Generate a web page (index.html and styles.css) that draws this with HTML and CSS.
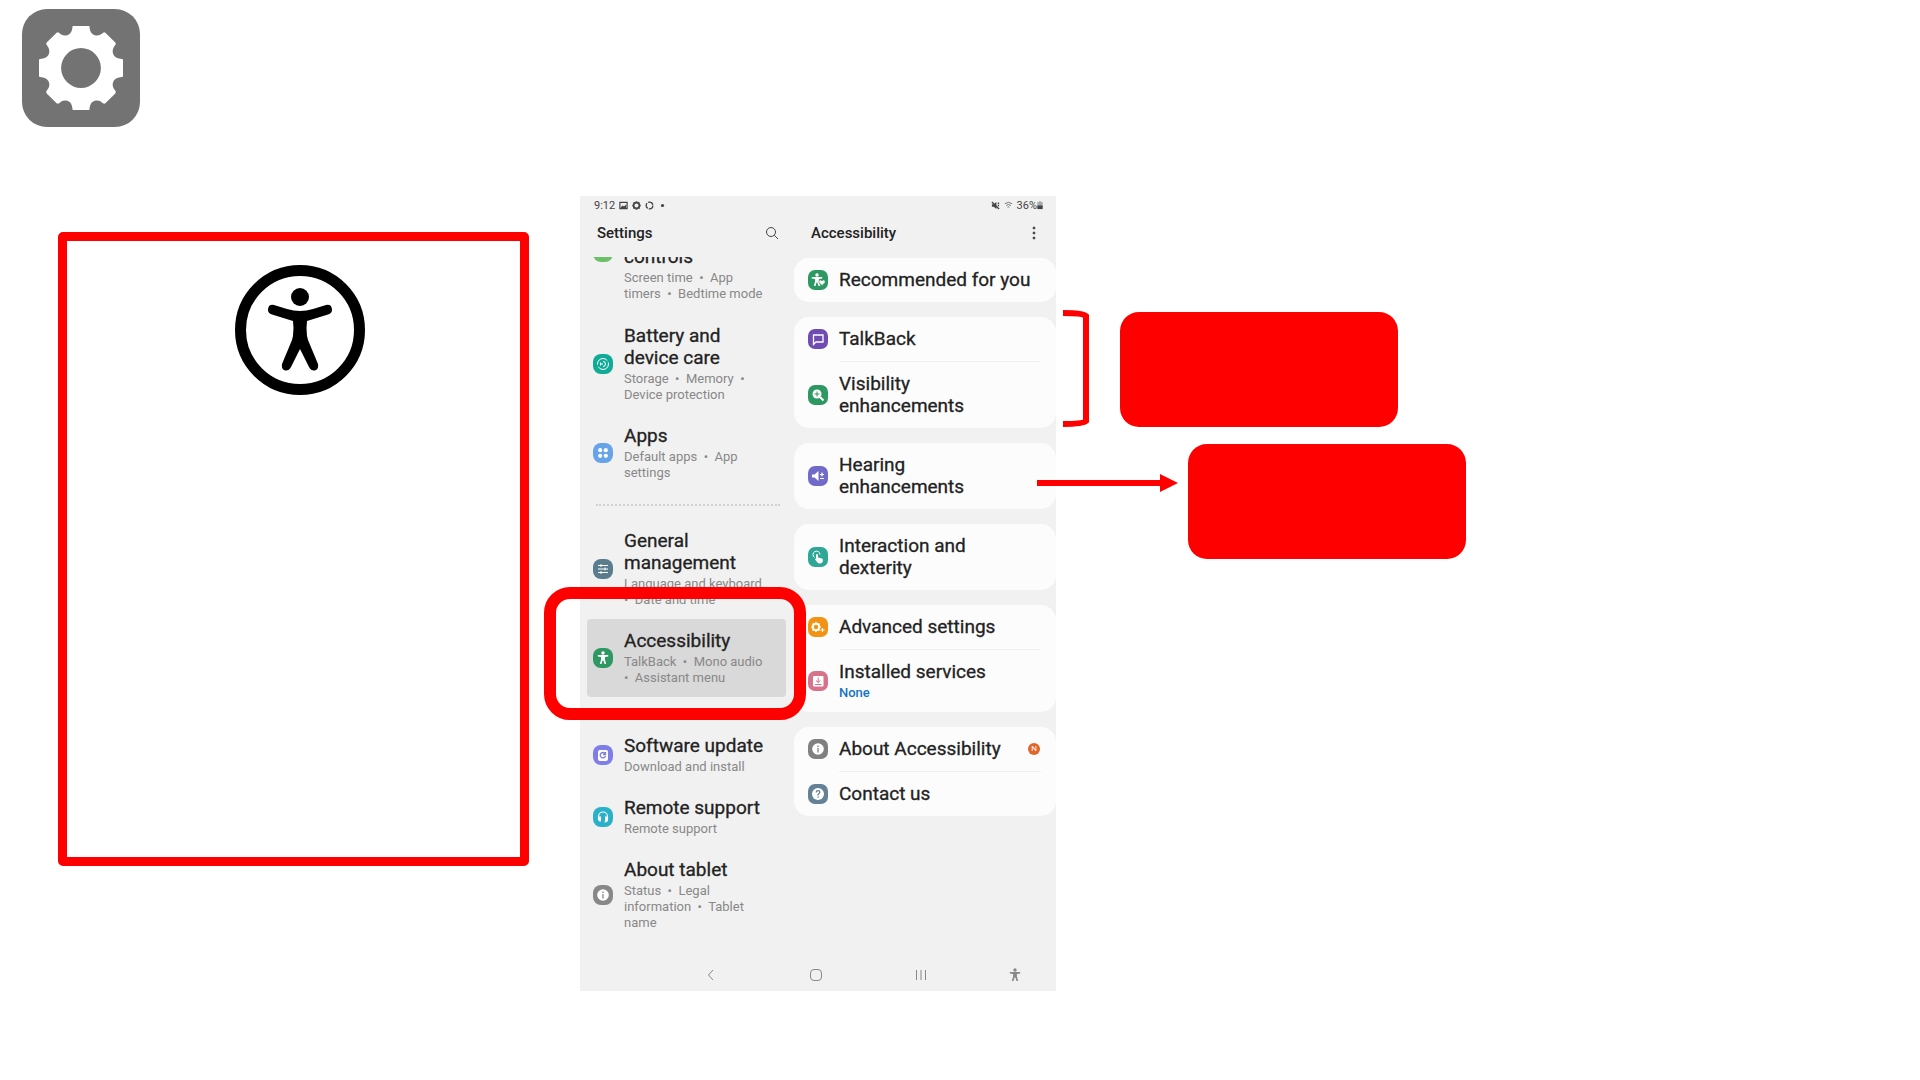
FILE: index.html
```html
<!DOCTYPE html>
<html lang="en">
<head>
    <meta charset="UTF-8">
    <meta name="viewport" content="width=device-width, initial-scale=1.0">
    <title>Accessibility settings</title>
    <link rel="stylesheet" href="styles.css">
</head>
<body>
    <svg class="defs" aria-hidden="true">
        <symbol id="person" viewBox="0 0 20 20">
            <circle cx="10" cy="5" r="1.7"/>
            <path d="M4.8 7.1h10.4v1.5l-3.3.5v2.3l1.3 4.6h-1.7L10.4 12.6h-.8L8.500 16H6.800l1.300-4.600V9.100l-3.300-.5z"/>
        </symbol>
        <symbol id="gear" viewBox="0 0 80 80">
            <path fill-rule="evenodd" d="M32 0Q32-1 33-1H47Q48-1 48 0C48.500 5 49.500 8 54 9C58 9.500 59.500 7 61.500 6Q62.500 5.500 63.500 6.500L72.500 15.500Q73.500 16.500 73 17.500C71.500 20 69.500 22 70.500 26C71.500 30 75 31 79 31.500Q80.500 31.500 80.500 33V47Q80.500 48.500 79 48.500C75 49 71.500 50 70.500 54C69.500 58 71.500 60 73 62Q73.500 63.500 72.500 64.500L63.500 73.500Q62.500 74.500 61.500 74C59.500 72.500 58 70.500 54 71C49.500 72 48.500 75 48 80Q48 81 47 81H33Q32 81 32 80C31.500 75 30.500 72 26 71C22 70.500 20.500 72.500 18.500 74Q17.500 74.500 16.500 73.500L7.500 64.500Q6.500 63.500 7 62C8.500 60 10.500 58 9.500 54C8.500 50 5 49 1 48.500Q-.5 48.500-.5 47V33Q-.5 31.500 1 31.500C5 31 8.500 30 9.500 26C10.500 22 8.500 20 7 17.500Q6.500 16.500 7.500 15.500L16.500 6.500Q17.500 5.500 18.500 6C20.500 7 22 9.500 26 9C30.500 8 31.500 5 32 0ZM40 21a19 19 0 1 0 0 38a19 19 0 1 0 0-38Z"/>
        </symbol>
    </svg>

    <header class="top">
        <div class="app-icon">
            <svg viewBox="-2 -2 84 84"><use href="#gear" width="80" height="80" overflow="visible"/></svg>
        </div>
    </header>

    <main class="slide">
        <section class="note">
            <svg class="note-icon" viewBox="0 0 130 130">
                <circle cx="65" cy="65" r="59.500" fill="none" stroke="#000" stroke-width="11"/>
                <circle cx="65" cy="32" r="9"/>
                <path d="M39 40Q33 39 33 45Q33 48 37 49.500L58 56Q59 63 58 71L57 75L47 99Q46 104 50 105.500Q54 106 56 102L65 84L74 102Q76 106 80 105.500Q84 104 83 99L73 75L72 71Q71 63 72 56L93 49.500Q97 48 97 45Q97 39 91 40L78 44Q65 48 52 44Z"/>
            </svg>
        </section>

        <section class="tablet">
            <div class="statusbar">
                <span>9:12</span>
                <svg viewBox="0 0 10 10"><path fill="none" stroke="#444" stroke-width="1.300" d="M1 1.500h8v7H1z"/><path d="M2 7l2-2 1.500 1L8 4v4H2z"/></svg>
                <svg viewBox="-2 -2 84 84"><use href="#gear" width="80" height="80"/></svg>
                <svg viewBox="0 0 10 10"><circle cx="5" cy="5" r="3.700" fill="none" stroke="#444" stroke-width="1.500" stroke-dasharray="6.500 1.200"/></svg>
                <svg viewBox="0 0 10 10"><circle cx="5" cy="5" r="1.800"/></svg>
                <div class="status-right">
                    <svg viewBox="0 0 10 10"><path d="M1 3.500h2L6 1v8L3 6.500H1z"/><path stroke="#444" stroke-width="1.500" d="M1 1l8 8M7.500 3l1.500-1M7.500 5H9"/></svg>
                    <svg viewBox="0 0 10 10"><path fill="none" stroke="#666" d="M1 3q4-3 8 0M2.500 5q2.500-2 5 0M4 7q1-1 2 0"/></svg>
                    <span>36%</span>
                    <svg class="battery" viewBox="0 0 6 10"><path fill="#aaa" d="M2 0h2v1h2v5H0V1h2z"/><path d="M0 5h6v4H0z"/></svg>
                </div>
            </div>

            <div class="titles">
                <div class="title-left">
                    <h1>Settings</h1>
                    <button type="button" aria-label="Search">
                        <svg viewBox="0 0 14 14"><circle cx="6" cy="6" r="4.500"/><path d="M9.300 9.300L13 13"/></svg>
                    </button>
                </div>
                <div class="title-right">
                    <h2>Accessibility</h2>
                    <button type="button" class="more" aria-label="More options">
                        <svg viewBox="0 0 14 14"><circle cx="7" cy="2" r="1"/><circle cx="7" cy="7" r="1"/><circle cx="7" cy="12" r="1"/></svg>
                    </button>
                </div>
            </div>

            <div class="panes">
                <nav class="menu">
                    <a href="#" class="item scrolled">
                        <svg class="icon" viewBox="0 0 20 20"><rect width="20" height="20" rx="8" fill="#6cc067"/></svg>
                        <span><b>controls</b><small>Screen time&nbsp; •&nbsp; App timers&nbsp; •&nbsp; Bedtime mode</small></span>
                    </a>
                    <a href="#" class="item">
                        <svg class="icon" viewBox="0 0 20 20"><rect width="20" height="20" rx="8" fill="#10ab97"/><circle cx="10" cy="10" r="5.500" fill="none" stroke="#fff" stroke-dasharray="14 2"/><path fill="none" stroke="#fff" d="M7.500 8.500v3M10 7.500a2.500 2.500 0 1 1 0 5M8 10h2"/></svg>
                        <span><b>Battery and device care</b><small>Storage&nbsp; •&nbsp; Memory&nbsp; •&nbsp; Device protection</small></span>
                    </a>
                    <a href="#" class="item">
                        <svg class="icon" viewBox="0 0 20 20"><rect width="20" height="20" rx="8" fill="#67a3e8"/><g fill="#fff"><circle cx="7.200" cy="7.200" r="2.100"/><circle cx="12.800" cy="7.200" r="2.100"/><circle cx="7.200" cy="12.800" r="2.100"/><circle cx="12.800" cy="12.800" r="2.100"/></g></svg>
                        <span><b>Apps</b><small>Default apps&nbsp; •&nbsp; App settings</small></span>
                    </a>
                    <hr>
                    <a href="#" class="item">
                        <svg class="icon" viewBox="0 0 20 20"><rect width="20" height="20" rx="8" fill="#5b7c8d"/><path stroke="#fff" d="M5 6.500h10M5 10h10M5 13.500h10M8 5v3M12 8.500v3M8 12v3"/></svg>
                        <span><b>General management</b><small>Language and keyboard&nbsp; •&nbsp; Date and time</small></span>
                    </a>
                    <a href="#" class="item selected" aria-current="page">
                        <svg class="icon" viewBox="0 0 20 20"><rect width="20" height="20" rx="8" fill="#2e9862"/><use href="#person" fill="#fff"/></svg>
                        <span><b>Accessibility</b><small>TalkBack&nbsp; •&nbsp; Mono audio&nbsp; •&nbsp; Assistant menu</small></span>
                    </a>
                    <hr>
                    <a href="#" class="item">
                        <svg class="icon" viewBox="0 0 20 20"><rect width="20" height="20" rx="8" fill="#7f7de8"/><rect x="5" y="5" width="10" height="11" rx="2" fill="#fff"/><path fill="none" stroke="#7f7de8" stroke-width="1.300" d="M12 8.500a2.700 2.700 0 1 0 .5 2.500M12.500 7v2.500H10"/></svg>
                        <span><b>Software update</b><small>Download and install</small></span>
                    </a>
                    <a href="#" class="item">
                        <svg class="icon" viewBox="0 0 20 20"><rect width="20" height="20" rx="8" fill="#2bb0c9"/><path fill="none" stroke="#fff" stroke-width="1.200" d="M5.500 12V9.500a4.500 4.500 0 0 1 9 0V12q0 3-3 3"/><path fill="#fff" d="M5 9.500h3v5H6.500L5 13zM12 9.500h3V13l-1.500 1.500H12z"/></svg>
                        <span><b>Remote support</b><small>Remote support</small></span>
                    </a>
                    <a href="#" class="item">
                        <svg class="icon" viewBox="0 0 20 20"><rect width="20" height="20" rx="8" fill="#888"/><circle cx="10" cy="10" r="5.800" fill="#fff"/><path stroke="#888" stroke-width="1.300" d="M10 6.500v1.400M10 9v4.500"/></svg>
                        <span><b>About tablet</b><small>Status&nbsp; •&nbsp; Legal information&nbsp; •&nbsp; Tablet name</small></span>
                    </a>
                </nav>

                <div class="cards">
                    <div class="card">
                        <a href="#" class="row">
                            <svg class="icon" viewBox="0 0 20 20"><rect width="20" height="20" rx="7" fill="#2e9862"/><use href="#person" fill="#fff" x="-1"/><path fill="#fff" stroke="#2e9862" stroke-width=".6" d="M14 15.500l-3-3q-.6-2.500 1.500-2.500 1 0 1.500 1 .5-1 1.500-1 2.200 0 1.500 2.500z"/></svg>
                            <b>Recommended for you</b>
                        </a>
                    </div>
                    <div class="card">
                        <a href="#" class="row">
                            <svg class="icon" viewBox="0 0 20 20"><rect width="20" height="20" rx="7" fill="#6f4bb2"/><path fill="none" stroke="#fff" stroke-width="1.300" d="M5.500 15.500V6h9.500v7H8z"/></svg>
                            <b>TalkBack</b>
                        </a>
                        <a href="#" class="row">
                            <svg class="icon" viewBox="0 0 20 20"><rect width="20" height="20" rx="7" fill="#2e9862"/><circle cx="9" cy="9" r="4.500" fill="#fff"/><path stroke="#fff" stroke-width="2" d="M12 12l3.500 3.500"/><path stroke="#2e9862" d="M6.500 9h5M9 6.500v5"/></svg>
                            <b>Visibility enhancements</b>
                        </a>
                    </div>
                    <div class="card">
                        <a href="#" class="row">
                            <svg class="icon" viewBox="0 0 20 20"><rect width="20" height="20" rx="7" fill="#706bc8"/><path fill="#fff" d="M4 8.500h2.500L10.500 5v10l-4-3.500H4z"/><path stroke="#fff" stroke-width="1.200" d="M12 8.500h4M14 6.500v4M12 12.500h4"/></svg>
                            <b>Hearing enhancements</b>
                        </a>
                    </div>
                    <div class="card">
                        <a href="#" class="row">
                            <svg class="icon" viewBox="0 0 20 20"><rect width="20" height="20" rx="7" fill="#2ea796"/><path fill="none" stroke="#fff" d="M6.500 10.500a3.500 3.500 0 1 1 5.500-3"/><path fill="#fff" d="M8 7.500q1-1 2 0v3l4 1q1 .5 1 2-.5 3-3 3-2 0-3-1.500L7 12.500q0-1 1-.5z"/></svg>
                            <b>Interaction and dexterity</b>
                        </a>
                    </div>
                    <div class="card">
                        <a href="#" class="row">
                            <svg class="icon" viewBox="0 0 20 20"><rect width="20" height="20" rx="7" fill="#f39314"/><svg x="3" y="5" width="10" height="10" viewBox="-2 -2 84 84"><use href="#gear" width="80" height="80" fill="#fff"/></svg><path stroke="#fff" d="M12.500 13h4M14.500 11v4"/></svg>
                            <b>Advanced settings</b>
                        </a>
                        <a href="#" class="row">
                            <svg class="icon" viewBox="0 0 20 20"><rect width="20" height="20" rx="7" fill="#d8728b"/><rect x="5" y="5" width="10.500" height="10.500" rx="1" fill="#fff"/><path fill="none" stroke="#d8728b" d="M10.200 6.500v5M8 9.500l2.200 2 2.200-2M7 13.500h6.500"/></svg>
                            <span><b>Installed services</b><small>None</small></span>
                        </a>
                    </div>
                    <div class="card">
                        <a href="#" class="row">
                            <svg class="icon" viewBox="0 0 20 20"><rect width="20" height="20" rx="7" fill="#808080"/><circle cx="10" cy="10" r="5.800" fill="#fff"/><path stroke="#808080" stroke-width="1.300" d="M10 6.500v1.400M10 9v4.500"/></svg>
                            <b>About Accessibility</b>
                            <span class="badge">N</span>
                        </a>
                        <a href="#" class="row">
                            <svg class="icon" viewBox="0 0 20 20"><rect width="20" height="20" rx="7" fill="#648195"/><circle cx="10" cy="10" r="6" fill="#fff"/><path fill="none" stroke="#648195" stroke-width="1.300" d="M8.200 8.500q0-1.800 1.800-1.800t1.800 1.600q0 1-1.800 2.200v1M10 12.500v1.200"/></svg>
                            <b>Contact us</b>
                        </a>
                    </div>
                </div>
            </div>

            <div class="navbar">
                <button type="button" aria-label="Back"><svg viewBox="0 0 14 14"><path d="M9 2L4.500 7 9 12"/></svg></button>
                <button type="button" aria-label="Home"><svg viewBox="0 0 14 14"><rect x="1.500" y="1.500" width="11" height="11" rx="3.500"/></svg></button>
                <button type="button" aria-label="Recents"><svg viewBox="0 0 14 14"><path d="M2.500 2v10M7 2v10M11.500 2v10"/></svg></button>
                <button type="button" class="shortcut" aria-label="Accessibility shortcut"><svg viewBox="4 3 12 14"><use href="#person" width="20" height="20"/></svg></button>
            </div>
        </section>

        <section class="callouts">
            <div class="callout">
                <svg class="bracket" viewBox="0 0 26 117"><path d="M0 3Q20 3 23 6V111Q20 114 0 114"/></svg>
                <div class="box"></div>
            </div>
            <div class="callout far">
                <svg class="arrow" viewBox="0 0 141 18"><path d="M0 6h123V0l18 9-18 9v-6H0z"/></svg>
                <div class="box"></div>
            </div>
        </section>
    </main>
</body>
</html>
```
FILE: styles.css
```css
body {
    margin: 0;
    background-color: #fff;
    font-family: Roboto, "Liberation Sans", sans-serif;
    color: #222;
}
.defs {
    position: absolute;
    width: 0;
    height: 0;
}
.top {
    padding: 9px 22px 69px;
}
.app-icon {
    display: flex;
    justify-content: center;
    align-items: center;
    width: 118px;
    height: 118px;
    border-radius: 25px;
    background-color: #737373;
}
.app-icon svg {
    width: 88px;
    height: 88px;
    fill: #fff;
}
.slide {
    display: grid;
    grid-template-columns: 471fr 527fr 864fr;
    align-items: start;
    padding-left: 58px;
}

/* Red frame on the left */
.note {
    display: flex;
    justify-content: center;
    align-items: flex-start;
    box-sizing: border-box;
    min-height: 634px;
    margin-top: 36px;
    padding-top: 24px;
    border: 9px solid #f00;
    border-radius: 5px;
}
.note-icon {
    width: 130px;
    height: 130px;
    margin-left: 12px;
}

/* Tablet screen */
.tablet {
    margin-left: 51px;
    background-color: #f1f1f1;
}
.statusbar {
    display: flex;
    align-items: center;
    gap: 4px;
    height: 18px;
    padding: 0 13px 0 14px;
    font-size: 11px;
    color: #444;
}
.statusbar svg {
    width: 9px;
    height: 9px;
    fill: #444;
}
.status-right {
    display: flex;
    align-items: center;
    gap: 4px;
    margin-left: auto;
}
.statusbar .battery {
    width: 6px;
    margin-left: -4px;
}
.titles, .panes {
    display: grid;
    grid-template-columns: 214fr 262fr;
}
.titles {
    position: relative;
    z-index: 1;
    padding-bottom: 5px;
    background-color: #f1f1f1;
}
.title-left, .title-right {
    display: flex;
    justify-content: space-between;
    align-items: center;
    height: 38px;
    padding: 0 15px 0 17px;
}
h1, h2 {
    margin: 0;
    font-size: 15px;
    font-weight: 500;
}
button {
    display: flex;
    padding: 0;
    border: none;
    background: none;
    cursor: pointer;
}
button svg {
    width: 14px;
    height: 14px;
    fill: none;
    stroke: #444;
}
button.more svg {
    fill: #333;
}
b {
    display: block;
    font-size: 19px;
    line-height: 22px;
    font-weight: 400;
    -webkit-text-stroke: 0.3px #222;
}
small {
    display: block;
    margin-top: 2px;
    font-size: 13px;
    line-height: 16px;
    color: #888;
}
.icon {
    flex: none;
    width: 20px;
    height: 20px;
}
.menu {
    padding: 0 8px 17px 7px;
}
.item {
    display: flex;
    align-items: center;
    gap: 11px;
    padding: 11px 12px 11px 6px;
    color: #222;
    text-decoration: none;
}
/* First entry is partly scrolled under the title bar */
.scrolled {
    align-items: flex-start;
    margin-top: -22px;
    padding-top: 7px;
    padding-bottom: 12px;
}
.scrolled b {
    margin-top: 4px;
}
.selected {
    position: relative;
    z-index: 2;
    border-radius: 4px;
    background-color: #d9d9d9;
}
.selected::after {
    content: "";
    position: absolute;
    inset: -32px -20px -23px -43px;
    border: 12px solid #f00;
    border-radius: 26px;
}
hr {
    margin: 12px 6px 13px 9px;
    border: none;
    border-top: 2px dotted #d2d2d2;
}
.cards {
    display: flex;
    flex-direction: column;
    gap: 15px;
    padding-top: 1px;
}
.card {
    border-radius: 15px;
    background-color: #fcfcfc;
}
.row {
    position: relative;
    display: flex;
    align-items: center;
    gap: 11px;
    padding: 11px 16px 11px 14px;
    color: #222;
    text-decoration: none;
}
.row > b {
    padding-right: 6px;
}
.row + .row {
    margin-top: 1px;
}
.row + .row::before {
    content: "";
    position: absolute;
    top: -1px;
    left: 45px;
    right: 15px;
    border-top: 1px solid #f0f0f0;
}
.row small {
    color: #1474c4;
    font-weight: 500;
}
.badge {
    width: 12px;
    margin-left: auto;
    border-radius: 50%;
    background-color: #e0662a;
    color: #fff;
    font-size: 8px;
    line-height: 12px;
    text-align: center;
}
.navbar {
    display: flex;
    align-items: center;
    justify-content: flex-end;
    gap: 91px;
    height: 32px;
    padding: 0 34px;
}
.navbar svg {
    stroke: #888;
}
.shortcut {
    margin-left: -11px;
}
.shortcut svg {
    fill: #888;
    stroke: none;
}

/* Callouts on the right */
.callouts {
    position: relative;
    padding-top: 114px;
}
.callout {
    display: flex;
    align-items: flex-end;
    gap: 31px;
    margin-left: 7px;
}
.callout.far {
    align-items: center;
    gap: 10px;
    margin-top: 17px;
    margin-left: -19px;
}
.callout svg {
    flex: none;
}
.bracket {
    width: 26px;
    height: 117px;
    fill: none;
    stroke: #f00;
    stroke-width: 6px;
}
.arrow {
    width: 141px;
    height: 18px;
    margin-bottom: 38px;
    fill: #f00;
}
.box {
    width: 14.5vw;
    height: 115px;
    border-radius: 19px;
    background-color: #f00;
}
```
